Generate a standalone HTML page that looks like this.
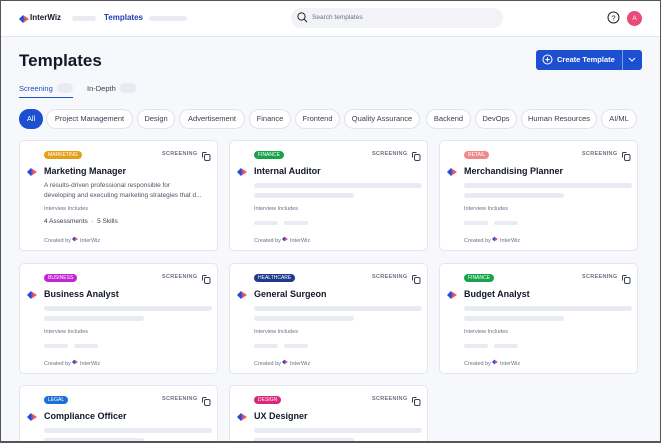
<!DOCTYPE html>
<html><head><meta charset="utf-8"><style>
*{box-sizing:border-box;margin:0;padding:0}
html{width:661px;height:443px;overflow:hidden}
body{width:661px;height:443px;overflow:hidden;font-family:"Liberation Sans",sans-serif;background:#f7f8fb;position:relative;color:#111827}
.frame{position:absolute;left:0;top:0;width:661px;height:443px;border:1px solid #555;border-bottom-width:2px;pointer-events:none;z-index:10}
.hdr{position:absolute;left:0;top:0;width:661px;height:37px;background:#fff;border-bottom:1px solid #e3e6eb}
.abs{position:absolute}
.sk{position:absolute;background:#e8ebf2;border-radius:4px}
.chip{position:absolute;top:109px;height:20px;border:1px solid #dfe3ea;border-radius:10px;background:#fff;font-size:7.5px;color:#374151;line-height:18px;text-align:center}
.card{position:absolute;width:199px;height:111px;background:#fff;border:1px solid #e3e6eb;border-radius:5px;overflow:hidden}
.badge{position:absolute;left:24px;top:10px;height:8px;border-radius:4px;font-size:5px;color:#fff;line-height:8px;padding:0 4px}
.scr{position:absolute;left:142px;top:10px;font-size:5.5px;color:#6b7280;letter-spacing:.3px;font-weight:bold}
.cp{position:absolute;left:181px;top:10px}
.ti{position:absolute;left:24px;top:25px;font-size:9px;font-weight:bold;color:#111827}
.lg{position:absolute;left:7px;top:26px}
.inc{position:absolute;left:24px;top:65px;font-size:5.5px;color:#6b7280}
.cb{position:absolute;left:24px;top:95px;font-size:5.5px;color:#6b7280}
</style></head><body>
<svg width="0" height="0" style="position:absolute"><defs>
<g id="lg"><path d="M0 5 L4 1 L6 5 L4 9Z" fill="#1d4ed8"/><path d="M4 1 L6 5 L4 9 L10 5Z" fill="#ef4444" opacity=".9"/><path d="M4 3 L6 5 L4 7Z" fill="#7c3aed"/></g>
<g id="cp"><rect x="3.5" y="3.5" width="5.5" height="6" rx="1.5" fill="none" stroke="#374151" stroke-width="1"/><path d="M5.5 1.5H2.5Q1.5 1.5 1.5 2.5V6.5" fill="none" stroke="#374151" stroke-width="1"/></g>
</defs></svg>
<div class="hdr"></div>
<svg class="abs" style="left:19px;top:14px" width="10" height="10" viewBox="0 0 10 10"><use href="#lg"/></svg>
<div class="abs" style="left:30px;top:13px;font-size:8px;font-weight:bold">InterWiz</div>
<div class="sk" style="left:72px;top:16px;width:24px;height:5px"></div>
<div class="abs" style="left:104px;top:13px;font-size:8px;font-weight:bold;color:#1e40af">Templates</div>
<div class="sk" style="left:149px;top:16px;width:38px;height:5px"></div>
<div class="abs" style="left:291px;top:8px;width:212px;height:20px;background:#f1f3f7;border-radius:10px"></div>
<svg class="abs" style="left:297px;top:12px" width="11" height="11"><circle cx="4.5" cy="4.5" r="3.6" fill="none" stroke="#222" stroke-width="1"/><path d="M7.2 7.2L10 10" stroke="#222" stroke-width="1"/></svg>
<div class="abs" style="left:312px;top:14px;font-size:6.5px;color:#6b7280">Search templates</div>
<svg class="abs" style="left:607px;top:11px" width="13" height="13"><circle cx="6.5" cy="6.5" r="5.5" fill="none" stroke="#222" stroke-width="1"/><text x="6.5" y="9.3" font-size="7.5" text-anchor="middle" font-family="Liberation Sans" fill="#222">?</text></svg>
<div class="abs" style="left:627px;top:11px;width:15px;height:15px;border-radius:50%;background:#e84a7a;color:#fff;font-size:6.5px;text-align:center;line-height:15px">A</div>
<div class="abs" style="left:19px;top:51px;font-size:17px;font-weight:bold">Templates</div>
<div class="abs" style="left:536px;top:50px;width:106px;height:20px;background:#1d4fd1;border-radius:3px"></div>
<div class="abs" style="left:622px;top:50px;width:1px;height:20px;background:#7a9be8"></div>
<svg class="abs" style="left:542px;top:54px" width="11" height="11"><circle cx="5.5" cy="5.5" r="4.5" fill="none" stroke="#fff" stroke-width="1"/><path d="M5.5 3.3v4.4M3.3 5.5h4.4" stroke="#fff" stroke-width="1"/></svg>
<div class="abs" style="left:557px;top:55px;font-size:7.5px;font-weight:bold;color:#fff">Create Template</div>
<svg class="abs" style="left:628px;top:57px" width="8" height="5"><path d="M1 1l3 3 3-3" fill="none" stroke="#fff" stroke-width="1"/></svg>
<div class="abs" style="left:19px;top:84px;font-size:7.5px;color:#1e4fbf">Screening</div>
<div class="sk" style="left:57px;top:83px;width:16px;height:10px;border-radius:5px"></div>
<div class="abs" style="left:19px;top:97px;width:54px;height:1px;background:#1e4fbf"></div>
<div class="abs" style="left:87px;top:84px;font-size:7.5px;color:#374151">In-Depth</div>
<div class="sk" style="left:120px;top:83px;width:16px;height:10px;border-radius:5px"></div>
<div class="chip" style="left:19px;width:24px;background:#1d4fd1;border-color:#1d4fd1;color:#fff">All</div>
<div class="chip" style="left:46px;width:87px">Project Management</div>
<div class="chip" style="left:137px;width:38px">Design</div>
<div class="chip" style="left:179px;width:66px">Advertisement</div>
<div class="chip" style="left:249px;width:42px">Finance</div>
<div class="chip" style="left:295px;width:45px">Frontend</div>
<div class="chip" style="left:344px;width:76px">Quality Assurance</div>
<div class="chip" style="left:426px;width:45px">Backend</div>
<div class="chip" style="left:475px;width:42px">DevOps</div>
<div class="chip" style="left:521px;width:76px">Human Resources</div>
<div class="chip" style="left:601px;width:36px">AI/ML</div>

<div class="card" style="left:19px;top:140px">
<div class="badge" style="background:#e5a01a">MARKETING</div><div class="scr">SCREENING</div><svg class="cp" width="11" height="11"><use href="#cp"/></svg>
<svg class="lg" width="10" height="10" viewBox="0 0 10 10"><use href="#lg"/></svg><div class="ti">Marketing Manager</div>
<div class="abs" style="left:24px;top:40px;font-size:6.5px;color:#4b5563;line-height:9.5px;white-space:nowrap">A results-driven professional responsible for<br>developing and executing marketing strategies that d...</div>
<div class="inc">Interview Includes</div>
<div class="abs" style="left:24px;top:77px;font-size:6.5px;color:#374151">4 Assessments &nbsp;·&nbsp; 5 Skills</div>
<div class="cb">Created by <svg width="6" height="6" viewBox="0 0 10 10"><use href="#lg"/></svg> InterWiz</div></div>

<div class="card" style="left:229px;top:140px"><div class="badge" style="background:#16a34a">FINANCE</div><div class="scr">SCREENING</div><svg class="cp" width="11" height="11"><use href="#cp"/></svg><svg class="lg" width="10" height="10" viewBox="0 0 10 10"><use href="#lg"/></svg><div class="ti">Internal Auditor</div><div class="sk" style="left:24px;top:42px;width:168px;height:5px"></div><div class="sk" style="left:24px;top:52px;width:100px;height:5px"></div><div class="inc">Interview Includes</div><div class="sk" style="left:24px;top:80px;width:24px;height:4px"></div><div class="sk" style="left:54px;top:80px;width:24px;height:4px"></div><div class="cb">Created by <svg width="6" height="6" viewBox="0 0 10 10"><use href="#lg"/></svg> InterWiz</div></div>
<div class="card" style="left:439px;top:140px"><div class="badge" style="background:#f08a8a">RETAIL</div><div class="scr">SCREENING</div><svg class="cp" width="11" height="11"><use href="#cp"/></svg><svg class="lg" width="10" height="10" viewBox="0 0 10 10"><use href="#lg"/></svg><div class="ti">Merchandising Planner</div><div class="sk" style="left:24px;top:42px;width:168px;height:5px"></div><div class="sk" style="left:24px;top:52px;width:100px;height:5px"></div><div class="inc">Interview Includes</div><div class="sk" style="left:24px;top:80px;width:24px;height:4px"></div><div class="sk" style="left:54px;top:80px;width:24px;height:4px"></div><div class="cb">Created by <svg width="6" height="6" viewBox="0 0 10 10"><use href="#lg"/></svg> InterWiz</div></div>

<div class="card" style="left:19px;top:263px"><div class="badge" style="background:#c026d3">BUSINESS</div><div class="scr">SCREENING</div><svg class="cp" width="11" height="11"><use href="#cp"/></svg><svg class="lg" width="10" height="10" viewBox="0 0 10 10"><use href="#lg"/></svg><div class="ti">Business Analyst</div><div class="sk" style="left:24px;top:42px;width:168px;height:5px"></div><div class="sk" style="left:24px;top:52px;width:100px;height:5px"></div><div class="inc">Interview Includes</div><div class="sk" style="left:24px;top:80px;width:24px;height:4px"></div><div class="sk" style="left:54px;top:80px;width:24px;height:4px"></div><div class="cb">Created by <svg width="6" height="6" viewBox="0 0 10 10"><use href="#lg"/></svg> InterWiz</div></div>
<div class="card" style="left:229px;top:263px"><div class="badge" style="background:#1e3a8a">HEALTHCARE</div><div class="scr">SCREENING</div><svg class="cp" width="11" height="11"><use href="#cp"/></svg><svg class="lg" width="10" height="10" viewBox="0 0 10 10"><use href="#lg"/></svg><div class="ti">General Surgeon</div><div class="sk" style="left:24px;top:42px;width:168px;height:5px"></div><div class="sk" style="left:24px;top:52px;width:100px;height:5px"></div><div class="inc">Interview Includes</div><div class="sk" style="left:24px;top:80px;width:24px;height:4px"></div><div class="sk" style="left:54px;top:80px;width:24px;height:4px"></div><div class="cb">Created by <svg width="6" height="6" viewBox="0 0 10 10"><use href="#lg"/></svg> InterWiz</div></div>
<div class="card" style="left:439px;top:263px"><div class="badge" style="background:#16a34a">FINANCE</div><div class="scr">SCREENING</div><svg class="cp" width="11" height="11"><use href="#cp"/></svg><svg class="lg" width="10" height="10" viewBox="0 0 10 10"><use href="#lg"/></svg><div class="ti">Budget Analyst</div><div class="sk" style="left:24px;top:42px;width:168px;height:5px"></div><div class="sk" style="left:24px;top:52px;width:100px;height:5px"></div><div class="inc">Interview Includes</div><div class="sk" style="left:24px;top:80px;width:24px;height:4px"></div><div class="sk" style="left:54px;top:80px;width:24px;height:4px"></div><div class="cb">Created by <svg width="6" height="6" viewBox="0 0 10 10"><use href="#lg"/></svg> InterWiz</div></div>

<div class="card" style="left:19px;top:385px;height:56px;border-bottom:none;border-radius:5px 5px 0 0"><div class="badge" style="background:#1d6fd8">LEGAL</div><div class="scr">SCREENING</div><svg class="cp" width="11" height="11"><use href="#cp"/></svg><svg class="lg" width="10" height="10" viewBox="0 0 10 10"><use href="#lg"/></svg><div class="ti">Compliance Officer</div><div class="sk" style="left:24px;top:42px;width:168px;height:5px"></div><div class="sk" style="left:24px;top:52px;width:100px;height:4px"></div></div>
<div class="card" style="left:229px;top:385px;height:56px;border-bottom:none;border-radius:5px 5px 0 0"><div class="badge" style="background:#db2777">DESIGN</div><div class="scr">SCREENING</div><svg class="cp" width="11" height="11"><use href="#cp"/></svg><svg class="lg" width="10" height="10" viewBox="0 0 10 10"><use href="#lg"/></svg><div class="ti">UX Designer</div><div class="sk" style="left:24px;top:42px;width:168px;height:5px"></div><div class="sk" style="left:24px;top:52px;width:100px;height:4px"></div></div>
<div class="frame"></div>
</body></html>
